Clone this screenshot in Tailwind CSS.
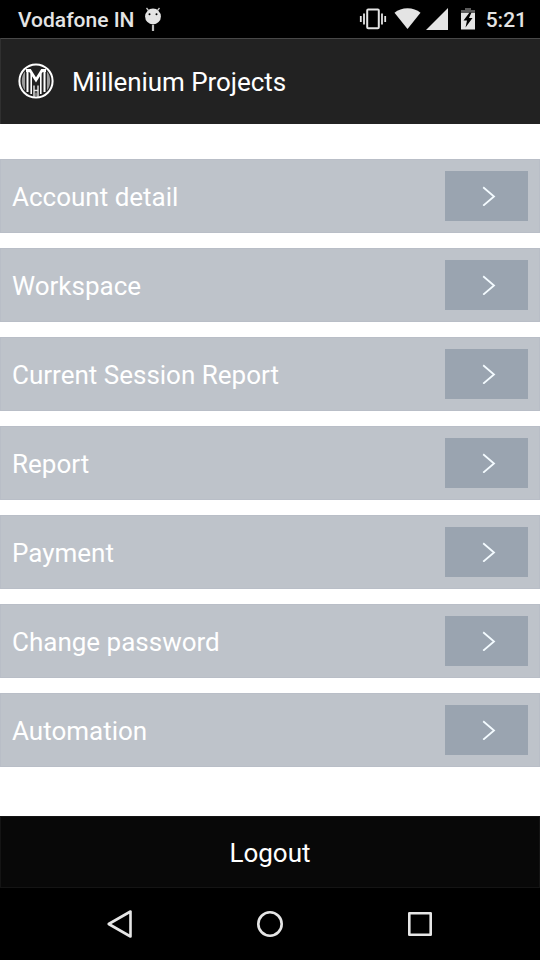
<!DOCTYPE html>
<html lang="en">
<head>
  <meta charset="UTF-8" />
  <meta name="viewport" content="width=device-width, initial-scale=1.0"/>
  <title>Millenium Projects</title>
  <script src="https://cdn.jsdelivr.net/npm/@tailwindcss/browser@4"></script>
</head>
<body class="bg-white font-['Roboto',sans-serif]">

  <div class="w-[540px] h-[960px] flex flex-col overflow-hidden">

    <!-- Status bar -->
    <div class="h-[38px] shrink-0 bg-black text-[#e4e4e4] flex items-center justify-between pl-[18px] pr-[13px]">
      <div class="flex items-center gap-[10px]">
        <span class="text-[21px] leading-[38px] pt-[2px] font-medium whitespace-nowrap">Vodafone IN</span>
        <svg class="w-[18px] h-[26px]" viewBox="0 0 18 26" fill="none">
          <path d="M4.500 4.500L2.500 2M13.500 4.500l2-2.500" stroke="#c8c8c8" stroke-width="1.300"/>
          <circle cx="9" cy="10.500" r="7.900" fill="#e4e4e4"/>
          <circle cx="5.500" cy="8.300" r="1" fill="#000"/>
          <circle cx="12.500" cy="8.300" r="1" fill="#000"/>
          <path d="M9 19v6" stroke="#bdbdbd" stroke-width="2.200"/>
        </svg>
      </div>
      <div class="flex items-center">
        <!-- Vibrate -->
        <svg class="w-[28px] h-[22px] mr-[7px]" viewBox="0 0 28 22" fill="none" stroke="#e4e4e4">
          <rect x="8.200" y="1.600" width="11.600" height="18.600" rx="1" stroke-width="2"/>
          <path d="M5 5.500v11M23 5.500v11" stroke-width="1.800"/>
          <path d="M1.800 8v6M26.200 8v6" stroke-width="1.800"/>
        </svg>
        <!-- Wifi -->
        <svg class="w-[27px] h-[22px] mr-[5px]" viewBox="0 0 27 22" fill="#e4e4e4">
          <path d="M13.500 21L.5 4.800C4 1.900 8.500 .3 13.500 .3s9.500 1.600 13 4.500z"/>
        </svg>
        <!-- Signal -->
        <svg class="w-[22px] h-[22px] mr-[13px]" viewBox="0 0 22 22" fill="#e4e4e4">
          <path d="M22 0v22H0z"/>
        </svg>
        <!-- Battery -->
        <svg class="w-[14px] h-[22px] mr-[11px]" viewBox="0 0 14 22">
          <path d="M4 0h6v2h4v4H0V2h4z" fill="#5c5c5c"/>
          <path d="M0 5h14v16.500H0z" fill="#e4e4e4"/>
          <path d="M8.500 4.500L2.500 12.500h3.500l-1.500 7 7-9.500H8l2.500-5.500z" fill="#000"/>
        </svg>
        <span class="text-[21px] leading-[38px] pt-[2px] font-medium">5:21</span>
      </div>
    </div>

    <!-- Title bar -->
    <div class="h-[86px] shrink-0 bg-[#222222] border-t border-t-[#484848] border-l border-l-[#303030] flex items-center pl-[17px] pb-[1px]">
      <svg class="w-[36px] h-[36px] mr-[18px]" viewBox="0 0 36 36" fill="none">
        <path d="M7 8.500C2.800 13 2.800 23 7 27.500zM29 8.500C33.200 13 33.200 23 29 27.500z" fill="#9b9b9b"/>
        <circle cx="18" cy="18" r="16.600" stroke="#fff" stroke-width="2"/>
        <path d="M9.500 29V8.500M26.500 29V8.500" stroke="#fff" stroke-width="2"/>
        <path d="M8 7.500h4L18 17l6-9.500h4" stroke="#fff" stroke-width="2.800"/>
        <path d="M13.200 11v20M22.800 11v20" stroke="#fff" stroke-width="1.600"/>
        <path d="M16 34V22.500M20 34V22.500M16 27.500h4" stroke="#e8e8e8" stroke-width="1.400"/>
        <path d="M18 29.500v4.500" stroke="#999" stroke-width="1.500"/>
      </svg>
      <h1 class="text-[26px] leading-[32px] pt-[2px] tracking-[-0.05px] text-white whitespace-nowrap">Millenium Projects</h1>
    </div>

    <!-- Menu -->
    <ul id="menu" class="grow pt-[35px] flex flex-col gap-[15px]"></ul>

    <!-- Logout -->
    <button class="h-[72px] shrink-0 bg-[#080808] border border-[#141414] text-white text-[26px] flex items-center justify-center pt-[2px]">Logout</button>

    <!-- Navigation bar -->
    <div class="h-[72px] shrink-0 bg-black flex items-center justify-between px-[105px]">
      <svg class="w-[30px] h-[30px]" viewBox="0 0 30 30" fill="none" stroke="#e6e6e6" stroke-width="2.600" stroke-linejoin="round">
        <path d="M25.500 2.500v25L3.700 15z"/>
      </svg>
      <svg class="w-[30px] h-[30px]" viewBox="0 0 30 30" fill="none" stroke="#e6e6e6" stroke-width="2.600">
        <circle cx="15" cy="15" r="11.700"/>
      </svg>
      <svg class="w-[30px] h-[30px]" viewBox="0 0 30 30" fill="none" stroke="#e6e6e6" stroke-width="2.600" stroke-linejoin="round">
        <path d="M4.300 4.300h21.400v21.400H4.300z"/>
      </svg>
    </div>
  </div>

  <script>
    const items = ['Account detail', 'Workspace', 'Current Session Report', 'Report', 'Payment', 'Change password', 'Automation'];

    document.getElementById('menu').innerHTML = items.map(label => `
      <li class="h-[74px] shrink-0 bg-[#bec3ca] border border-[#b9bec7] flex items-center justify-between pl-[11px] pr-[11px]">
        <span class="text-[26px] leading-[32px] pt-[2px] text-white whitespace-nowrap">${label}</span>
        <span class="w-[83px] h-[50px] bg-[#9aa4b0] flex items-center justify-center">
          <svg class="w-[14px] h-[20px] ml-[4px]" viewBox="0 0 14 20" fill="none" stroke="#f4fbff" stroke-width="1.800">
            <path d="M1.200 1.300L12 10.500 1.200 19.700"/>
          </svg>
        </span>
      </li>
    `).join('');
  </script>
</body>
</html>
